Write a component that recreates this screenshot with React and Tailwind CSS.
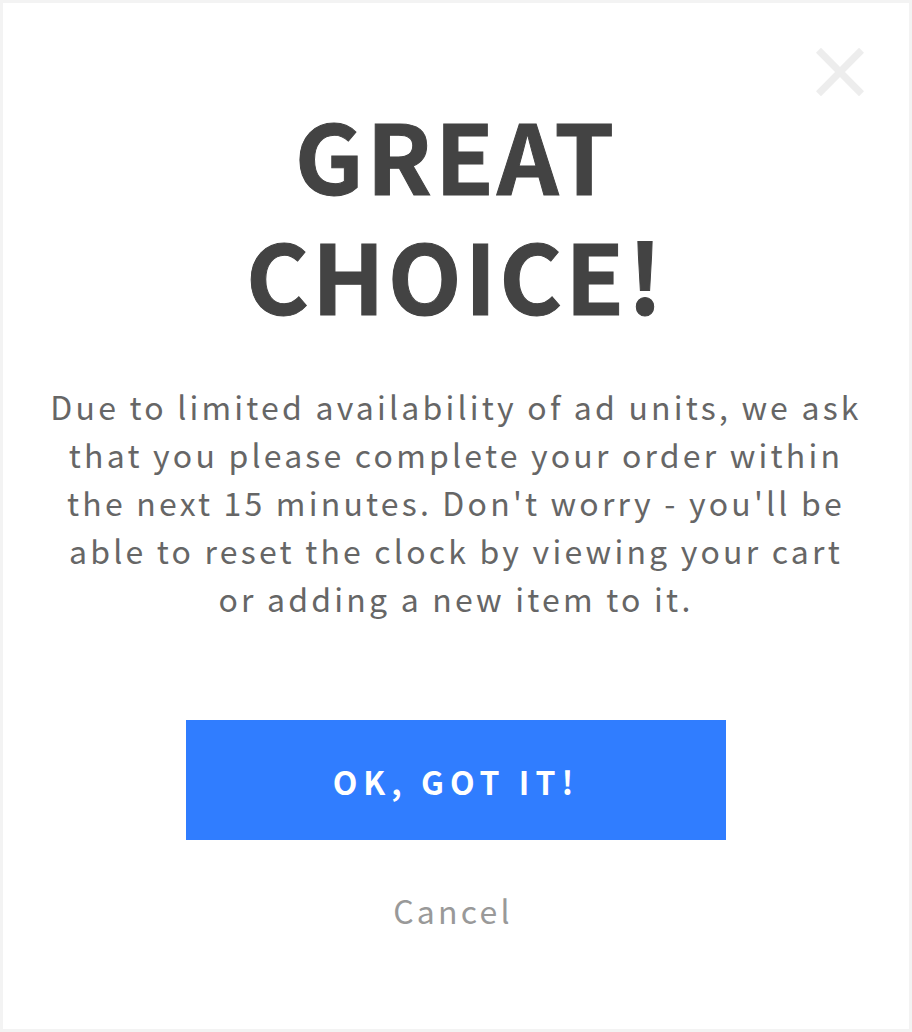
export default function App() {
  return (
    <main className="flex min-h-screen bg-white font-['Noto_Sans_CJK_SC',sans-serif]">
      <section
        role="dialog"
        aria-labelledby="dialog-title"
        className="flex grow flex-col items-center border-3 border-[#f3f3f3] px-[45px] pt-[45px] text-center"
      >
        <button type="button" aria-label="Close" className="self-end text-[#ededed]">
          <svg viewBox="0 0 48 48" className="size-12" fill="none" stroke="currentColor" strokeWidth="7">
            <path d="M2.5 2.2 45.5 45.8M45.5 2.2 2.5 45.8" />
          </svg>
        </button>
        <h1
          id="dialog-title"
          className="-mt-0.5 text-8xl leading-[120px] font-bold tracking-[3px] text-[#434343] [-webkit-text-stroke:1px_#434343]"
        >
          <span className="block">GREAT</span>
          <span className="block">CHOICE!</span>
        </h1>
        <p className="mt-12 max-w-[812px] text-[32px] leading-12 tracking-widest text-[#666666]">
          Due to limited availability of ad units, we ask that you please complete your order within the next 15
          minutes. Don't worry - you'll be able to reset the clock by viewing your cart or adding a new item to it.
        </p>
        <button
          type="button"
          className="mt-[98px] h-[120px] w-full max-w-[540px] bg-[#307dff] pt-0.5 text-[32px] font-bold tracking-[6px] text-white"
        >
          OK, GOT IT!
        </button>
        <button type="button" className="mt-[46px] pr-1.5 text-[32px] leading-12 tracking-widest text-[#999999]">
          Cancel
        </button>
      </section>
    </main>
  );
}
